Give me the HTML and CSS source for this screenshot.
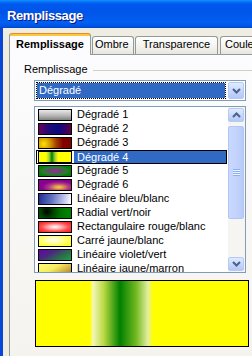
FILE: index.html
```html
<!DOCTYPE html>
<html>
<head>
<meta charset="utf-8">
<link rel="stylesheet" href="styles.css">
</head>
<body>
<div class="window">
  <div class="titlebar">Remplissage</div>
  <div class="frame">
    <div class="client">
      <div class="tabs">
        <div class="tab sel">Remplissage</div>
        <div class="tab t-ombre">Ombre</div>
        <div class="tab t-trans">Transparence</div>
        <div class="tab t-coul">Couleur</div>
      </div>
      <div class="panel">
        <div class="group-head">
          <span class="group-label">Remplissage</span>
          <span class="group-line"></span>
        </div>
        <div class="combo">
          <div class="combo-value">Dégradé</div>
          <div class="btn">
            <svg width="9" height="6" viewBox="0 0 9 6"><path d="M1 1 L4.5 4.5 L8 1" fill="none" stroke="#4D6185" stroke-width="2"/></svg>
          </div>
        </div>
        <div class="list">
          <div class="items">
            <div class="item"><span class="sw g1"></span><span class="lbl">Dégradé 1</span></div>
            <div class="item"><span class="sw g2"></span><span class="lbl">Dégradé 2</span></div>
            <div class="item"><span class="sw g3"></span><span class="lbl">Dégradé 3</span></div>
            <div class="item sel"><span class="sw g4"></span><span class="lbl">Dégradé 4</span></div>
            <div class="item"><span class="sw g5"></span><span class="lbl">Dégradé 5</span></div>
            <div class="item"><span class="sw g6"></span><span class="lbl">Dégradé 6</span></div>
            <div class="item"><span class="sw g7"></span><span class="lbl">Linéaire bleu/blanc</span></div>
            <div class="item"><span class="sw g8"></span><span class="lbl">Radial vert/noir</span></div>
            <div class="item"><span class="sw g9"></span><span class="lbl">Rectangulaire rouge/blanc</span></div>
            <div class="item"><span class="sw g10"></span><span class="lbl">Carré jaune/blanc</span></div>
            <div class="item"><span class="sw g11"></span><span class="lbl">Linéaire violet/vert</span></div>
            <div class="item"><span class="sw g12"></span><span class="lbl">Linéaire jaune/marron</span></div>
          </div>
          <div class="scroll">
            <div class="btn sbtn">
              <svg width="9" height="6" viewBox="0 0 9 6"><path d="M1 5 L4.5 1.5 L8 5" fill="none" stroke="#4D6185" stroke-width="2"/></svg>
            </div>
            <div class="thumb"><span class="grip"></span></div>
            <div class="spacer"></div>
            <div class="btn sbtn">
              <svg width="9" height="6" viewBox="0 0 9 6"><path d="M1 1 L4.5 4.5 L8 1" fill="none" stroke="#4D6185" stroke-width="2"/></svg>
            </div>
          </div>
        </div>
        <div class="preview"></div>
      </div>
    </div>
  </div>
</div>
</body>
</html>
```

FILE: styles.css
```css
* { box-sizing: border-box; }
html, body { margin: 0; padding: 0; }
body {
  width: 252px;
  height: 356px;
  overflow: hidden;
  font-family: "Liberation Sans", Arial, sans-serif;
  font-size: 11px;
  color: #000;
  background: #ECE9D8;
}
.window { width: 252px; height: 356px; display: flex; flex-direction: column; overflow: hidden; }
.titlebar {
  height: 28px;
  flex: none;
  padding: 8px 0 0 7px;
  line-height: 16px;
  font-size: 13px;
  font-weight: bold;
  letter-spacing: -0.4px;
  color: #fff;
  text-shadow: 1px 1px 0 #0A1883;
  background: linear-gradient(to bottom, #0997FF 0, #0B6CF5 2px, #0058EE 4px, #0055E8 45%, #0260F2 80%, #0055E5 92%, #0046D0 100%);
}
.frame {
  flex: 1;
  display: flex;
  overflow: hidden;
  border-left: 3px solid #0846D8;
  background: #EFEDE2;
}
.client { flex: 1; min-width: 0; padding: 5px 0 0 6px; display: flex; flex-direction: column; overflow: hidden; }
.tabs { height: 21px; display: flex; align-items: flex-end; flex: none; }
.tab {
  height: 18px;
  padding: 1px 0 3px;
  line-height: 13px;
  text-align: center;
  white-space: nowrap;
  border: 1px solid #919B9C;
  border-bottom: none;
  border-radius: 3px 3px 0 0;
  background: linear-gradient(to bottom, #FFFFFF, #F3F2EE 60%, #E6E5DE);
  margin-left: 1px;
  flex: none;
}
.tab.sel {
  position: relative;
  z-index: 1;
  height: 22px;
  width: 82px;
  margin: 0 0 -1px 0;
  padding: 4px 0 4px;
  font-weight: bold;
  border-top: 1px solid #E68B2C;
  background: linear-gradient(to bottom, #FFC73C 0, #FFC73C 2px, #FCFCFE 2px);
}
.t-ombre { width: 42px; text-align: left; padding-left: 2px; }
.t-trans { width: 83px; }
.t-coul { width: 50px; text-align: left; padding-left: 4px; margin-left: 2px; }
.panel {
  flex: 1;
  border: 1px solid #919B9C;
  border-right: none;
  border-bottom: none;
  background: linear-gradient(to bottom, #FCFCFE, #F4F3EE);
  padding: 8px 0 0 0;
}
.group-head { display: flex; align-items: center; height: 13px; margin-left: 14px; line-height: 13px; }
.group-line { flex: 1; border-top: 1px solid #D0D0BF; margin-left: 5px; margin-top: 1px; }
.combo {
  margin: 4px 0 0 24px;
  width: 212px;
  height: 21px;
  border: 1px solid #7F9DB9;
  background: #fff;
  padding: 1px;
  display: flex;
  align-items: flex-start;
  gap: 2px;
}
.combo-value {
  width: 191px;
  height: 17px;
  line-height: 15px;
  padding-left: 2px;
  color: #fff;
  border: 1px dotted #000;
  background: linear-gradient(#316AC5, #316AC5) padding-box, #fff border-box;
}
.btn {
  width: 16px;
  height: 17px;
  border: 1px solid #B6C9F3;
  border-radius: 2px;
  background: linear-gradient(to bottom, #E1EAFE, #C3D4FD 60%, #B4C8F7);
  display: flex;
  align-items: center;
  justify-content: center;
}
.list {
  margin: 5px 0 0 24px;
  width: 212px;
  height: 167px;
  border: 1px solid #7F9DB9;
  background: #fff;
  display: flex;
  overflow: hidden;
}
.items { width: 192px; flex: none; padding: 1px 0 0 1px; }
.item { width: 191px; height: 14px; display: flex; align-items: flex-start; line-height: 14px; white-space: nowrap; }
.sw {
  flex: none;
  width: 34px;
  height: 12px;
  margin: 1px 0 0 2px;
  border: 1px solid #000;
}
.lbl { flex: 1; height: 14px; margin-left: 2px; padding-left: 3px; line-height: 13px; }
.item.sel { outline: 1px solid #000; outline-offset: -1px; }
.item.sel .lbl { background: #316AC5; color: #fff; border: 1px solid #000; border-left: none; padding-left: 3px; line-height: 12px; }
.scroll {
  width: 17px;
  margin-left: 1px;
  padding: 1px 0;
  display: flex;
  flex-direction: column;
  background: #F6F5F1;
}
.sbtn { width: 16px; height: 14px; }
.thumb {
  width: 16px;
  height: 93px;
  margin-top: 4px;
  border: 1px solid #B1C6F6;
  border-radius: 2px;
  background: linear-gradient(to right, #C9D8FC, #C3D3FD 50%, #B8CBF7);
  display: flex;
  align-items: center;
  justify-content: center;
}
.grip {
  width: 7px;
  height: 7px;
  background: repeating-linear-gradient(to bottom, #8CB0F8 0, #8CB0F8 1px, #EEF4FE 1px, #EEF4FE 2px);
}
.spacer { flex: 1; }
.preview {
  margin: 7px 0 0 25px;
  width: 214px;
  height: 67px;
  border: 1px solid #000;
  background: linear-gradient(to right, #FFFF00 0, #FFFF00 54px, #F4F6B8 57px, #B8D840 68px, #008000 84px, #70B820 100px, #E4EEA0 112px, #FFFF00 117px, #FFFF00 100%);
}
.g1 { background: linear-gradient(to bottom, #E8E8E8, #B8B8B8 55%, #808080); }
.g2 { background: linear-gradient(to right, #6A0060, #200A78 30%, #0A0A80 60%, #3A0060 85%, #600040); }
.g3 { background: radial-gradient(circle at 15% 60%, #FFE400 0, #D09000 25%, #A04000 45%, #800000 70%); }
.g4 { background: linear-gradient(to right, #FFFF00 0, #FFFF00 22%, #A0D030 32%, #008000 40%, #A0D030 50%, #FFFF00 60%, #FFFF00 100%); }
.g5 { background: radial-gradient(ellipse at 50% 50%, #A02C8C 0, #70407A 20%, #2A7A30 55%, #008000 80%); }
.g6 { background: radial-gradient(ellipse at 62% 72%, #F8D040 0, #E09850 15%, #B04080 35%, #8A0090 60%); }
.g7 { background: linear-gradient(100deg, #1E2C90 0, #6070C0 40%, #C8CCF0 80%, #FFFFFF 100%); }
.g8 { background: radial-gradient(circle at 25% 35%, #000000 0, #004000 25%, #007000 55%, #008000 80%); }
.g9 { background: radial-gradient(ellipse at 50% 50%, #FFFFFF 0, #FFB0B0 30%, #FF5050 60%, #FF2020 90%); }
.g10 { background: radial-gradient(ellipse at 45% 40%, #FFFFFF 0, #FFFFA0 35%, #FFFF40 70%, #FFFF20 100%); }
.g11 { background: linear-gradient(150deg, #6A00A8 0, #4A2880 35%, #2E6850 65%, #20A040 100%); }
.g12 { background: linear-gradient(150deg, #FFFF70 0, #F4EC60 45%, #D0B040 75%, #A87830 100%); }
```
